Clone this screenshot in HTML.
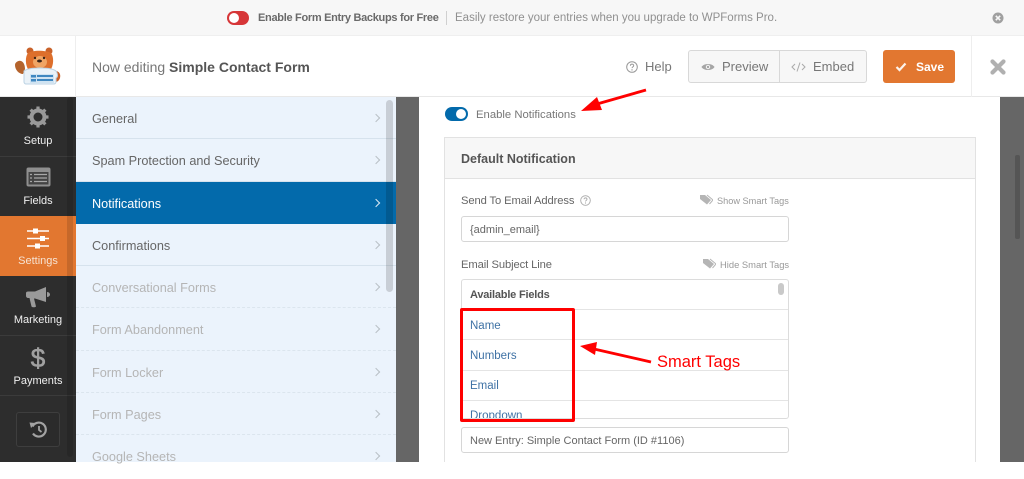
<!DOCTYPE html>
<html><head><meta charset="utf-8">
<style>
*{box-sizing:border-box}
html,body{margin:0;padding:0;width:1024px;height:462px;overflow:hidden;background:#fff;font-family:"Liberation Sans",sans-serif}
.t{position:absolute;white-space:nowrap;line-height:16px}
.b{position:absolute}
.mi{position:absolute;left:76px;width:320px;height:42.3px;border-bottom:1px solid #d6e2ed;padding-left:16px;font-size:12.7px;line-height:44px;color:#666}
.mi.d{color:#b5b5b5;border-bottom:1px dashed #dbe5ee}
.chev{position:absolute;right:17px;top:18px;width:6px;height:6px;border-top:1.3px solid #b9c0c6;border-right:1.3px solid #b9c0c6;transform:rotate(45deg)}
.sl{position:absolute;left:0;width:76px;text-align:center;color:#f0f0f0;font-size:11px;line-height:14px}
.tag{font-size:11.5px;color:#3f72a5;left:470px}
.ln{position:absolute;left:462px;width:326px;height:1px;background:#e4e4e4}
.inp{position:absolute;left:461px;width:328px;height:26px;border:1px solid #d6d6d6;border-radius:3px;font-size:11px;color:#666;line-height:26px;padding-left:8px;background:#fff}
</style></head><body>

<!-- top notice bar -->
<div class="b" style="left:0;top:0;width:1024px;height:36px;background:#f7f7f7;border-bottom:1px solid #efefef"></div>
<div class="b" style="left:227px;top:11px;width:22px;height:14px;border-radius:7px;background:#d63638"></div>
<div class="b" style="left:229px;top:13px;width:10px;height:10px;border-radius:50%;background:#fff"></div>
<div class="t" style="left:258px;top:10px;font-size:11px;font-weight:bold;color:#6a6a6a;letter-spacing:-.3px">Enable Form Entry Backups for Free</div>
<div class="b" style="left:446px;top:11px;width:1px;height:14px;background:#d0d0d0"></div>
<div class="t" style="left:455px;top:10px;font-size:11.5px;color:#909090">Easily restore your entries when you upgrade to WPForms Pro.</div>
<svg class="b" style="left:992px;top:12px" width="12" height="12" viewBox="0 0 12 12"><circle cx="6" cy="6" r="5.5" fill="#a0a0a0"/><path d="M3.800 3.800l4.400 4.400M8.200 3.800L3.800 8.200" stroke="#f7f7f7" stroke-width="1.600"/></svg>

<!-- header -->
<div class="b" style="left:0;top:36px;width:1024px;height:61px;background:#fff;border-bottom:1px solid #e8e8e8"></div>
<div class="b" style="left:75px;top:36px;width:1px;height:61px;background:#eee"></div>
<div class="b" style="left:971px;top:36px;width:1px;height:61px;background:#eee"></div>

<!-- logo -->
<svg class="b" style="left:13px;top:47px" width="50" height="39" viewBox="0 0 50 39">
<path d="M2 18c0-3 4-5 6-4 3 1 4 5 4 8l-2 5c-4 0-8-4-8-9z" fill="#b4632c"/>
<circle cx="17" cy="4" r="3.500" fill="#c9622a"/><circle cx="36" cy="4" r="3.500" fill="#c9622a"/>
<path d="M15 6c4-3 18-3 23 0 3 4 3 12-1 18H16c-4-6-4-14-1-18z" fill="#dd6f2c"/>
<ellipse cx="27" cy="15" rx="7" ry="6" fill="#f0a565"/>
<circle cx="22" cy="11" r="1.200" fill="#3a2418"/><circle cx="31" cy="11" r="1.200" fill="#3a2418"/>
<ellipse cx="26.500" cy="14" rx="2.500" ry="1.500" fill="#3a2418"/>
<path d="M42 24c4 0 6 3 5 7-1 3-3 4-5 4z" fill="#c9622a"/>
<path d="M11 24c5-4 27-4 32 0 2 3 2 6 0 7v4c0 1-1 2-2 2H13c-1 0-2-1-2-2z" fill="#eaf2f8" stroke="#bcd3e4" stroke-width="1"/>
<rect x="17" y="27" width="24" height="9" fill="#cfe3f2"/>
<rect x="18" y="28" width="5" height="2.500" fill="#3f87c0"/><rect x="18" y="32" width="5" height="2.500" fill="#3f87c0"/>
<rect x="24" y="28" width="16" height="2" fill="#3f87c0"/><rect x="24" y="32" width="16" height="2" fill="#3f87c0"/>
</svg>

<div class="t" style="left:92px;top:59px;font-size:14px;color:#777">Now editing <span style="font-weight:bold;color:#555">Simple Contact Form</span></div>

<!-- help -->
<svg class="b" style="left:626px;top:61px" width="12" height="12" viewBox="0 0 12 12"><circle cx="6" cy="6" r="5.300" fill="none" stroke="#999" stroke-width="1"/><path d="M4.400 4.700c0-2.100 3.300-2.100 3.300-.1 0 1.200-1.700 1.300-1.700 2.500" fill="none" stroke="#999" stroke-width="1"/><circle cx="6" cy="8.900" r=".7" fill="#999"/></svg>
<div class="t" style="left:645px;top:59px;font-size:13px;color:#777">Help</div>

<!-- preview / embed -->
<div class="b" style="left:688px;top:50px;width:179px;height:33px;background:#f7f7f7;border:1px solid #d8d8d8;border-radius:3px"></div>
<div class="b" style="left:779px;top:50px;width:1px;height:33px;background:#d8d8d8"></div>
<svg class="b" style="left:701px;top:62px" width="14" height="10" viewBox="0 0 14 10"><path d="M0.500 5C3 1 11 1 13.500 5 11 9 3 9 .5 5z" fill="#a6a6a6"/><circle cx="7" cy="5" r="2.200" fill="#f7f7f7"/><circle cx="7" cy="5" r="1.200" fill="#a6a6a6"/></svg>
<div class="t" style="left:722px;top:59px;font-size:13px;color:#777">Preview</div>
<svg class="b" style="left:791px;top:61px" width="15" height="12" viewBox="0 0 15 12"><path d="M4 3L1 6l3 3M11 3l3 3-3 3M9 1.500L6 10.500" fill="none" stroke="#aaa" stroke-width="1"/></svg>
<div class="t" style="left:813px;top:59px;font-size:13px;color:#777">Embed</div>

<!-- save -->
<div class="b" style="left:883px;top:50px;width:72px;height:33px;background:#e27730;border-radius:3px"></div>
<svg class="b" style="left:895px;top:62px" width="12" height="10" viewBox="0 0 12 10"><path d="M1.500 5l3 3 6-6.500" fill="none" stroke="#fff" stroke-opacity=".9" stroke-width="2.200"/></svg>
<div class="t" style="left:916px;top:59px;font-size:12px;font-weight:bold;color:#fff">Save</div>

<!-- close -->
<svg class="b" style="left:990px;top:59px" width="16" height="16" viewBox="0 0 16 16"><path d="M2.500 2.500l11 11M13.500 2.500l-11 11" stroke="#b0b0b0" stroke-width="4.200" stroke-linecap="round"/></svg>

<!-- dark sidebar -->
<div class="b" style="left:0;top:97px;width:76px;height:365px;background:#2d2d2d"></div>
<div class="b" style="left:0;top:156px;width:76px;height:1px;background:#3b3b3b"></div>
<div class="b" style="left:0;top:335px;width:76px;height:1px;background:#3b3b3b"></div>
<div class="b" style="left:0;top:395px;width:76px;height:1px;background:#3b3b3b"></div>
<div class="b" style="left:0;top:216px;width:76px;height:60px;background:#e27730"></div>
<div class="b" style="left:67px;top:97px;width:6px;height:360px;background:rgba(0,0,0,.12);border-radius:3px"></div>

<svg class="b" style="left:27px;top:106px" width="22" height="22" viewBox="0 0 22 22"><circle cx="11" cy="11" r="6.500" fill="none" stroke="#999" stroke-width="4"/><path d="M11 .5v4M11 17.500v4M.5 11h4M17.500 11h4M3.600 3.600l2.800 2.800M15.600 15.600l2.800 2.800M18.400 3.600l-2.800 2.800M6.400 15.600l-2.800 2.800" stroke="#999" stroke-width="3.200"/></svg>
<div class="sl" style="top:134px">Setup</div>

<svg class="b" style="left:26px;top:167px" width="25" height="20" viewBox="0 0 25 20"><rect x="0.500" y="0.500" width="24" height="19" rx="2" fill="#8f8f8f"/><rect x="2.500" y="5" width="20" height="12.500" fill="#444"/><path d="M8 7.500h13M8 11h13M8 14.500h13M4 7.500h2M4 11h2M4 14.500h2" stroke="#a8a8a8" stroke-width="1.300"/></svg>
<div class="sl" style="top:194px">Fields</div>

<svg class="b" style="left:27px;top:228px" width="22" height="21" viewBox="0 0 22 21"><path d="M0 3h22M0 10.500h22M0 18h22" stroke="#fff" stroke-width="1.400"/><rect x="6" y="0.500" width="5" height="5" fill="#fff"/><rect x="13" y="8" width="5" height="5" fill="#fff"/><rect x="8" y="15.500" width="5" height="5" fill="#fff"/></svg>
<div class="sl" style="top:254px;color:#f6e3d3">Settings</div>

<svg class="b" style="left:26px;top:287px" width="25" height="21" viewBox="0 0 25 21"><path d="M0 6c0-1 1-1.500 2-1.500h7L20 0v15L9 11.500H8l2 8c-1 1-3.500 1-4.500 0L3.500 11H2c-1 0-2-1-2-2z" fill="#9a9a9a"/><path d="M21 5c2 0 3 1.500 3 2.500S23 10 21 10z" fill="#9a9a9a"/></svg>
<div class="sl" style="top:313px">Marketing</div>

<div class="t" style="left:0;width:76px;text-align:center;top:345px;font-size:26px;line-height:27px;color:#a0a0a0;-webkit-text-stroke:.6px #a0a0a0">$</div>
<div class="sl" style="top:374px">Payments</div>

<div class="b" style="left:16px;top:412px;width:44px;height:35px;border:1px solid #3e3e3e;border-radius:3px;background:#2b2b2b"></div>
<svg class="b" style="left:29px;top:421px" width="18" height="17" viewBox="0 0 18 17"><path d="M3.500 5.500A7 7 0 1 1 4 12.500" fill="none" stroke="#a3a3a3" stroke-width="2.200"/><path d="M0.500 1.500l6 .5-4.500 5z" fill="#a3a3a3"/><path d="M10 5v4l2.500 2" fill="none" stroke="#a3a3a3" stroke-width="1.800"/></svg>

<!-- settings menu -->
<div class="b" style="left:76px;top:97px;width:320px;height:365px;background:#ebf3fc"></div>
<div class="mi" style="top:97px">General<i class="chev"></i></div>
<div class="mi" style="top:139.300px">Spam Protection and Security<i class="chev"></i></div>
<div class="mi" style="top:181.500px;background:#036aab;color:#fff;border:0">Notifications<i class="chev" style="border-color:#dce9f4"></i></div>
<div class="mi" style="top:223.800px">Confirmations<i class="chev"></i></div>
<div class="mi d" style="top:266px">Conversational Forms<i class="chev"></i></div>
<div class="mi d" style="top:308.300px">Form Abandonment<i class="chev"></i></div>
<div class="mi d" style="top:350.500px">Form Locker<i class="chev"></i></div>
<div class="mi d" style="top:392.800px">Form Pages<i class="chev"></i></div>
<div class="mi d" style="top:435px;border:0">Google Sheets<i class="chev"></i></div>
<div class="b" style="left:386px;top:100px;width:7px;height:192px;background:rgba(0,0,0,.15);border-radius:4px"></div>

<!-- grey gutters -->
<div class="b" style="left:396px;top:97px;width:23px;height:365px;background:#666"></div>
<div class="b" style="left:1000px;top:97px;width:24px;height:365px;background:#666"></div>
<div class="b" style="left:1015px;top:155px;width:5px;height:84px;background:#555;border-radius:2px"></div>

<!-- enable notifications -->
<div class="b" style="left:445px;top:107px;width:23px;height:14px;border-radius:7px;background:#036aab"></div>
<div class="b" style="left:456px;top:109px;width:10px;height:10px;border-radius:50%;background:#fff"></div>
<div class="t" style="left:476px;top:107px;font-size:11.300px;color:#777">Enable Notifications</div>

<!-- panel -->
<div class="b" style="left:444px;top:137px;width:532px;height:325px;border:1px solid #e2e2e2;border-bottom:0;background:#fff"></div>
<div class="b" style="left:444px;top:137px;width:532px;height:42px;background:#f7f7f7;border:1px solid #e2e2e2"></div>
<div class="t" style="left:461px;top:151px;font-size:12.500px;font-weight:bold;color:#555">Default Notification</div>

<div class="t" style="left:461px;top:193px;font-size:11.200px;letter-spacing:-.1px;color:#666">Send To Email Address</div>
<svg class="b" style="left:580px;top:195px" width="11" height="11" viewBox="0 0 11 11"><circle cx="5.500" cy="5.500" r="4.800" fill="none" stroke="#aaa" stroke-width=".9"/><path d="M4 4.300c0-1.900 3-1.900 3 0 0 1-1.500 1.100-1.500 2.200" fill="none" stroke="#aaa" stroke-width=".9"/><circle cx="5.500" cy="8" r=".6" fill="#aaa"/></svg>
<svg class="b" style="left:700px;top:194px" width="13" height="11" viewBox="0 0 13 11"><path d="M0 1h5l6 5-4 4.500L0 5z" fill="#b5b5b5"/><path d="M7 1l6 5-3.500 4" fill="none" stroke="#b5b5b5" stroke-width="1"/></svg>
<div class="t" style="left:717px;top:193px;font-size:9.200px;color:#999">Show Smart Tags</div>
<div class="inp" style="top:216px">{admin_email}</div>

<div class="t" style="left:461px;top:257px;font-size:11.200px;letter-spacing:-.1px;color:#666">Email Subject Line</div>
<svg class="b" style="left:703px;top:258px" width="13" height="11" viewBox="0 0 13 11"><path d="M0 1h5l6 5-4 4.500L0 5z" fill="#b5b5b5"/><path d="M7 1l6 5-3.500 4" fill="none" stroke="#b5b5b5" stroke-width="1"/></svg>
<div class="t" style="left:720px;top:257px;font-size:9.400px;color:#999">Hide Smart Tags</div>

<!-- smart tags -->
<div class="b" style="left:461px;top:279px;width:328px;height:140px;border:1px solid #dcdcdc;border-radius:3px;background:#fff"></div>
<div class="t" style="left:470px;top:287px;font-size:11px;letter-spacing:-.2px;font-weight:bold;color:#555">Available Fields</div>
<div class="b" style="left:778px;top:283px;width:6px;height:12px;background:#c9c9c9;border-radius:3px"></div>
<div class="ln" style="top:309px"></div>
<div class="ln" style="top:339px"></div>
<div class="ln" style="top:370px"></div>
<div class="ln" style="top:400px"></div>
<div class="t tag" style="top:318px">Name</div>
<div class="t tag" style="top:348px">Numbers</div>
<div class="t tag" style="top:378px">Email</div>
<div class="b" style="left:462px;top:402px;width:100px;height:16px;overflow:hidden"><div class="t tag" style="left:8px;top:6px">Dropdown</div></div>

<div class="inp" style="top:427px">New Entry: Simple Contact Form (ID #1106)</div>

<!-- annotations -->
<div class="b" style="left:460px;top:308px;width:115px;height:114px;border:3px solid #f00;border-radius:2px"></div>
<svg class="b" style="left:0;top:0" width="1024" height="462" viewBox="0 0 1024 462">
<path d="M646 90L597 104" stroke="#f00" stroke-width="2.800"/>
<path d="M581 111L597 97 602 110z" fill="#f00"/>
<path d="M651 362L594 349" stroke="#f00" stroke-width="2.800"/>
<path d="M580 346L597 342 595 355z" fill="#f00"/>
</svg>
<div class="t" style="left:657px;top:353px;font-size:16.500px;line-height:19px;color:#f00">Smart Tags</div>

</body></html>
